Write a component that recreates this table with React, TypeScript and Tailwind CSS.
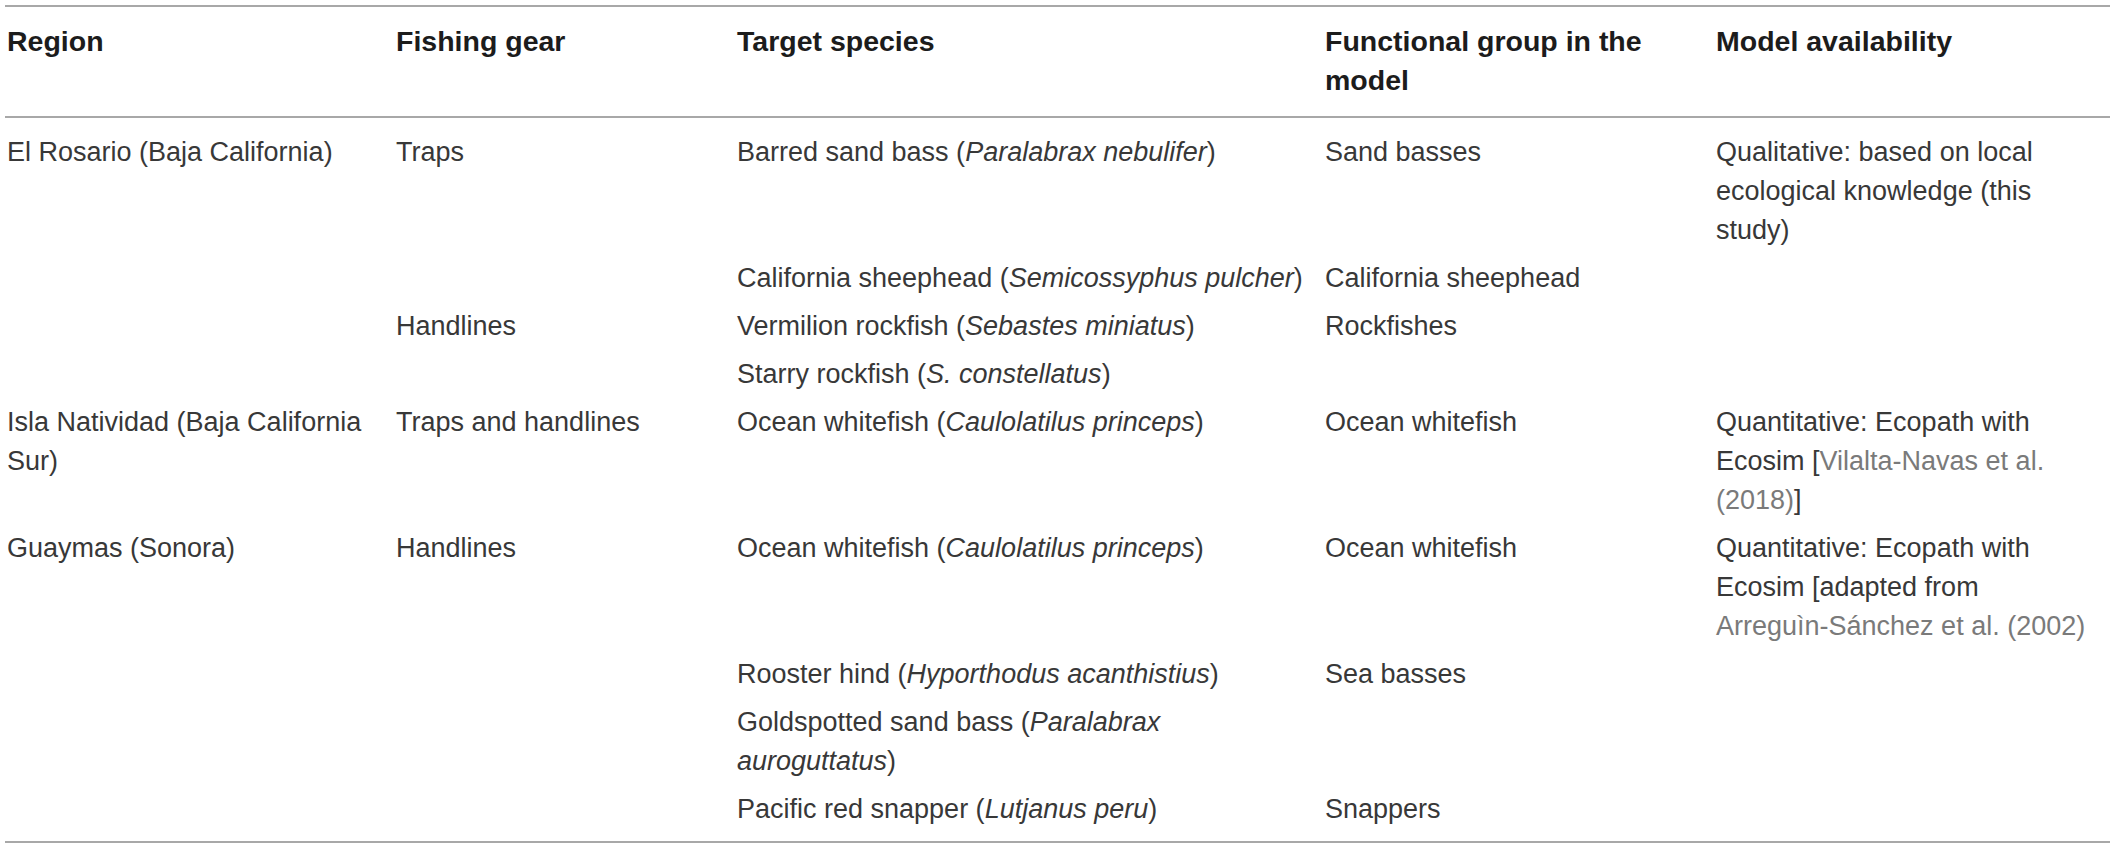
import React from "react";

const cell = "pt-[5px] pb-[4px] whitespace-nowrap";

function Ref({ children }: { children: React.ReactNode }) {
  return <span className="text-[#7a7a7a]">{children}</span>;
}

export default function App() {
  const cols = "grid grid-cols-[391px_341px_588px_391px_1fr]";
  return (
    <div className="w-[2117px] h-[848px] bg-white pt-[5px] pl-[5px] pr-[7px] font-['Liberation_Sans',Arial,sans-serif] text-[#383838]">
      <div className="border-t-2 border-b-2 border-[#a8a8a8]">
        {/* Header */}
        <div className={`${cols} border-b-2 border-[#a8a8a8] pt-[15px] pb-[16px] text-[28.5px] leading-[39px] font-bold text-[#1c1c1c]`}>
          <div className="pl-[2px]">Region</div>
          <div>Fishing gear</div>
          <div>Target species</div>
          <div className="whitespace-nowrap">
            Functional group in the
            <br />
            model
          </div>
          <div>Model availability</div>
        </div>

        {/* Body */}
        <div className={`${cols} pt-[10px] pb-[8px] text-[27px] leading-[39px]`}>
          {/* Row 1 */}
          <div className={`${cell} pl-[2px]`}>El Rosario (Baja California)</div>
          <div className={cell}>Traps</div>
          <div className={cell}>
            Barred sand bass (<i>Paralabrax nebulifer</i>)
          </div>
          <div className={cell}>Sand basses</div>
          <div className={cell}>
            Qualitative: based on local
            <br />
            ecological knowledge (this
            <br />
            study)
          </div>

          {/* Row 2 */}
          <div className={cell}></div>
          <div className={cell}></div>
          <div className={cell}>
            California sheephead (<i>Semicossyphus pulcher</i>)
          </div>
          <div className={cell}>California sheephead</div>
          <div className={cell}></div>

          {/* Row 3 */}
          <div className={cell}></div>
          <div className={cell}>Handlines</div>
          <div className={cell}>
            Vermilion rockfish (<i>Sebastes miniatus</i>)
          </div>
          <div className={cell}>Rockfishes</div>
          <div className={cell}></div>

          {/* Row 4 */}
          <div className={cell}></div>
          <div className={cell}></div>
          <div className={cell}>
            Starry rockfish (<i>S. constellatus</i>)
          </div>
          <div className={cell}></div>
          <div className={cell}></div>

          {/* Row 5 */}
          <div className={`${cell} pl-[2px]`}>
            Isla Natividad (Baja California
            <br />
            Sur)
          </div>
          <div className={cell}>Traps and handlines</div>
          <div className={cell}>
            Ocean whitefish (<i>Caulolatilus princeps</i>)
          </div>
          <div className={cell}>Ocean whitefish</div>
          <div className={cell}>
            Quantitative: Ecopath with
            <br />
            Ecosim [<Ref>Vilalta-Navas et al.</Ref>
            <br />
            <Ref>(2018)</Ref>]
          </div>

          {/* Row 6 */}
          <div className={`${cell} pl-[2px]`}>Guaymas (Sonora)</div>
          <div className={cell}>Handlines</div>
          <div className={cell}>
            Ocean whitefish (<i>Caulolatilus princeps</i>)
          </div>
          <div className={cell}>Ocean whitefish</div>
          <div className={cell}>
            Quantitative: Ecopath with
            <br />
            Ecosim [adapted from
            <br />
            <Ref>Arreguìn-Sánchez et al. (2002)</Ref>
          </div>

          {/* Row 7 */}
          <div className={cell}></div>
          <div className={cell}></div>
          <div className={cell}>
            Rooster hind (<i>Hyporthodus acanthistius</i>)
          </div>
          <div className={cell}>Sea basses</div>
          <div className={cell}></div>

          {/* Row 8 */}
          <div className={cell}></div>
          <div className={cell}></div>
          <div className={cell}>
            Goldspotted sand bass (<i>Paralabrax</i>
            <br />
            <i>auroguttatus</i>)
          </div>
          <div className={cell}></div>
          <div className={cell}></div>

          {/* Row 9 */}
          <div className={cell}></div>
          <div className={cell}></div>
          <div className={cell}>
            Pacific red snapper (<i>Lutjanus peru</i>)
          </div>
          <div className={cell}>Snappers</div>
          <div className={cell}></div>
        </div>
      </div>
    </div>
  );
}
